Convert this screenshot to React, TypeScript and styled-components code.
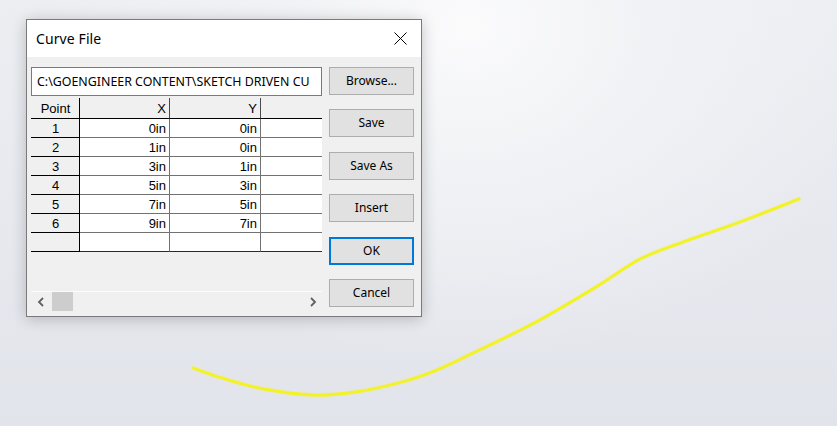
import React from "react";
import styled, { createGlobalStyle } from "styled-components";

const GlobalStyle = createGlobalStyle`
  html, body { margin: 0; padding: 0; }
  body { background: #e4e6ec; }
  * { box-sizing: border-box; }
`;

const Desktop = styled.div`
  position: relative;
  width: 837px;
  height: 426px;
  overflow: hidden;
  padding: 19px 0 0 26px;
  background:
    radial-gradient(ellipse 520px 420px at 56% 6%, #fbfbfc 0%, #f1f2f5 35%, rgba(230,232,238,0) 80%),
    linear-gradient(180deg, #eceef2 0%, #e2e4eb 100%);
`;

const CurveSvg = styled.svg`
  position: absolute;
  left: 0;
  top: 0;
  width: 837px;
  height: 426px;
  pointer-events: none;
`;

const Dialog = styled.div`
  position: relative;
  z-index: 1;
  width: 396px;
  height: 298px;
  border: 1px solid #7a7a7a;
  background: #f0f0f0;
  box-shadow: 0 2px 14px rgba(0, 0, 0, 0.22);
  display: flex;
  flex-direction: column;
  font-family: "Noto Sans", "Open Sans", sans-serif;
  color: #000;
`;

const TitleBar = styled.div`
  height: 37px;
  flex: none;
  background: #ffffff;
  display: flex;
  align-items: center;
  justify-content: space-between;
  padding: 0 14px 0 9px;
`;

const Title = styled.span`
  font-size: 14px;
  letter-spacing: 0.1px;
`;

const CloseIcon = styled.svg`
  width: 13px;
  height: 13px;
  display: block;
`;

const Body = styled.div`
  flex: 1;
  display: flex;
  gap: 7px;
  padding: 10px 7px 0 4px;
`;

const LeftCol = styled.div`
  width: 291px;
  display: flex;
  flex-direction: column;
`;

const PathBox = styled.div`
  height: 29px;
  border: 1px solid #7a7a7a;
  background: #fff;
  padding: 0 4px 0 5px;
  display: flex;
  align-items: center;
  font-size: 12.4px;
  white-space: nowrap;
  overflow: hidden;
`;

const Grid = styled.div`
  margin-top: 2px;
  display: grid;
  grid-template-columns: 49px 90px 91px 61px;
  grid-template-rows: 21px repeat(7, 19px);
  font-family: "Liberation Sans", Arial, sans-serif;
  font-size: 13px;
`;

type CellKind = "corner" | "colhead" | "colheadlast" | "rowhead" | "data" | "datalast";

const Cell = styled.div<{ $kind: CellKind; $last?: boolean }>`
  display: flex;
  align-items: center;
  padding: 0 3px 0 0;
  overflow: hidden;
  white-space: nowrap;
  background: ${(p) =>
    p.$kind === "data" || p.$kind === "datalast" ? "#ffffff" : "#f0f0f0"};
  justify-content: ${(p) =>
    p.$kind === "corner" || p.$kind === "rowhead" ? "center" : "flex-end"};
  border-right: ${(p) =>
    p.$kind === "corner" || p.$kind === "rowhead"
      ? "1px solid #000"
      : p.$kind === "colhead"
      ? "1px solid #4a4a4a"
      : p.$kind === "data"
      ? "1px solid #727272"
      : "none"};
  border-bottom: ${(p) =>
    p.$kind === "corner" || p.$kind === "colhead" || p.$kind === "colheadlast" || p.$kind === "rowhead"
      ? "1px solid #000"
      : p.$last
      ? "1px solid #2a2a2a"
      : "1px solid #727272"};
  ${(p) => (p.$kind === "corner" || p.$kind === "rowhead" ? "padding: 0 0 0 1px;" : "")}
`;

const Spacer = styled.div`
  flex: 1;
`;

const ScrollBar = styled.div`
  height: 20px;
  margin-bottom: 5px;
  border-top: 1px solid #fbfbfb;
  background: #f0f0f0;
  display: flex;
  align-items: stretch;
`;

const ArrowBtn = styled.div`
  width: 19px;
  display: flex;
  align-items: center;
  justify-content: center;
`;

const Thumb = styled.div`
  width: 21px;
  margin-left: 2px;
  background: #cdcdcd;
`;

const ButtonCol = styled.div`
  width: 85px;
  display: flex;
  flex-direction: column;
  gap: 14.4px;
`;

const Button = styled.div<{ $default?: boolean }>`
  height: 28px;
  background: #e1e1e1;
  border: ${(p) => (p.$default ? "2px solid #0078d7" : "1px solid #adadad")};
  display: flex;
  align-items: center;
  justify-content: center;
  font-size: 12px;
  padding-bottom: 1px;
`;

const points: [number, number][] = [
  [193, 368],
  [222, 378],
  [264, 389],
  [314, 395],
  [356, 392],
  [398, 383],
  [432, 372],
  [473, 353],
  [536, 322],
  [596, 287],
  [640, 259],
  [683, 242],
  [740, 222],
  [799, 199],
];

function catmullRom(pts: [number, number][]): string {
  let d = `M${pts[0][0]},${pts[0][1]}`;
  for (let i = 0; i < pts.length - 1; i++) {
    const p0 = pts[i - 1] || pts[i];
    const p1 = pts[i];
    const p2 = pts[i + 1];
    const p3 = pts[i + 2] || p2;
    const c1x = p1[0] + (p2[0] - p0[0]) / 6;
    const c1y = p1[1] + (p2[1] - p0[1]) / 6;
    const c2x = p2[0] - (p3[0] - p1[0]) / 6;
    const c2y = p2[1] - (p3[1] - p1[1]) / 6;
    d += ` C${c1x.toFixed(1)},${c1y.toFixed(1)} ${c2x.toFixed(1)},${c2y.toFixed(1)} ${p2[0]},${p2[1]}`;
  }
  return d;
}

const rows = [
  ["1", "0in", "0in"],
  ["2", "1in", "0in"],
  ["3", "3in", "1in"],
  ["4", "5in", "3in"],
  ["5", "7in", "5in"],
  ["6", "9in", "7in"],
  ["", "", ""],
];

const buttons = ["Browse...", "Save", "Save As", "Insert", "OK", "Cancel"];

export default function App() {
  const d = catmullRom(points);
  return (
    <>
      <GlobalStyle />
      <Desktop>
        <CurveSvg viewBox="0 0 837 426">
          <path d={d} fill="none" stroke="#f4f43a" strokeWidth={4.2} strokeOpacity={0.35} strokeLinecap="round" />
          <path d={d} fill="none" stroke="#f2f226" strokeWidth={2.8} strokeLinecap="round" />
        </CurveSvg>
        <Dialog>
          <TitleBar>
            <Title>Curve File</Title>
            <CloseIcon viewBox="0 0 13 13">
              <path d="M0.5 0.5 L12.5 12.5 M12.5 0.5 L0.5 12.5" stroke="#000" strokeWidth={1} fill="none" />
            </CloseIcon>
          </TitleBar>
          <Body>
            <LeftCol>
              <PathBox>C:\GOENGINEER CONTENT\SKETCH DRIVEN CU</PathBox>
              <Grid>
                <Cell $kind="corner">Point</Cell>
                <Cell $kind="colhead">X</Cell>
                <Cell $kind="colhead">Y</Cell>
                <Cell $kind="colheadlast" />
                {rows.map((r, i) => {
                  const last = i === rows.length - 1;
                  return (
                    <React.Fragment key={i}>
                      <Cell $kind="rowhead">{r[0]}</Cell>
                      <Cell $kind="data" $last={last}>{r[1]}</Cell>
                      <Cell $kind="data" $last={last}>{r[2]}</Cell>
                      <Cell $kind="datalast" $last={last} />
                    </React.Fragment>
                  );
                })}
              </Grid>
              <Spacer />
              <ScrollBar>
                <ArrowBtn>
                  <svg width="8" height="10" viewBox="0 0 8 10">
                    <path d="M6 1 L2 5 L6 9" stroke="#606060" strokeWidth={1.8} fill="none" />
                  </svg>
                </ArrowBtn>
                <Thumb />
                <Spacer />
                <ArrowBtn>
                  <svg width="8" height="10" viewBox="0 0 8 10">
                    <path d="M2 1 L6 5 L2 9" stroke="#606060" strokeWidth={1.8} fill="none" />
                  </svg>
                </ArrowBtn>
              </ScrollBar>
            </LeftCol>
            <ButtonCol>
              {buttons.map((b) => (
                <Button key={b} $default={b === "OK"}>
                  {b}
                </Button>
              ))}
            </ButtonCol>
          </Body>
        </Dialog>
      </Desktop>
    </>
  );
}
